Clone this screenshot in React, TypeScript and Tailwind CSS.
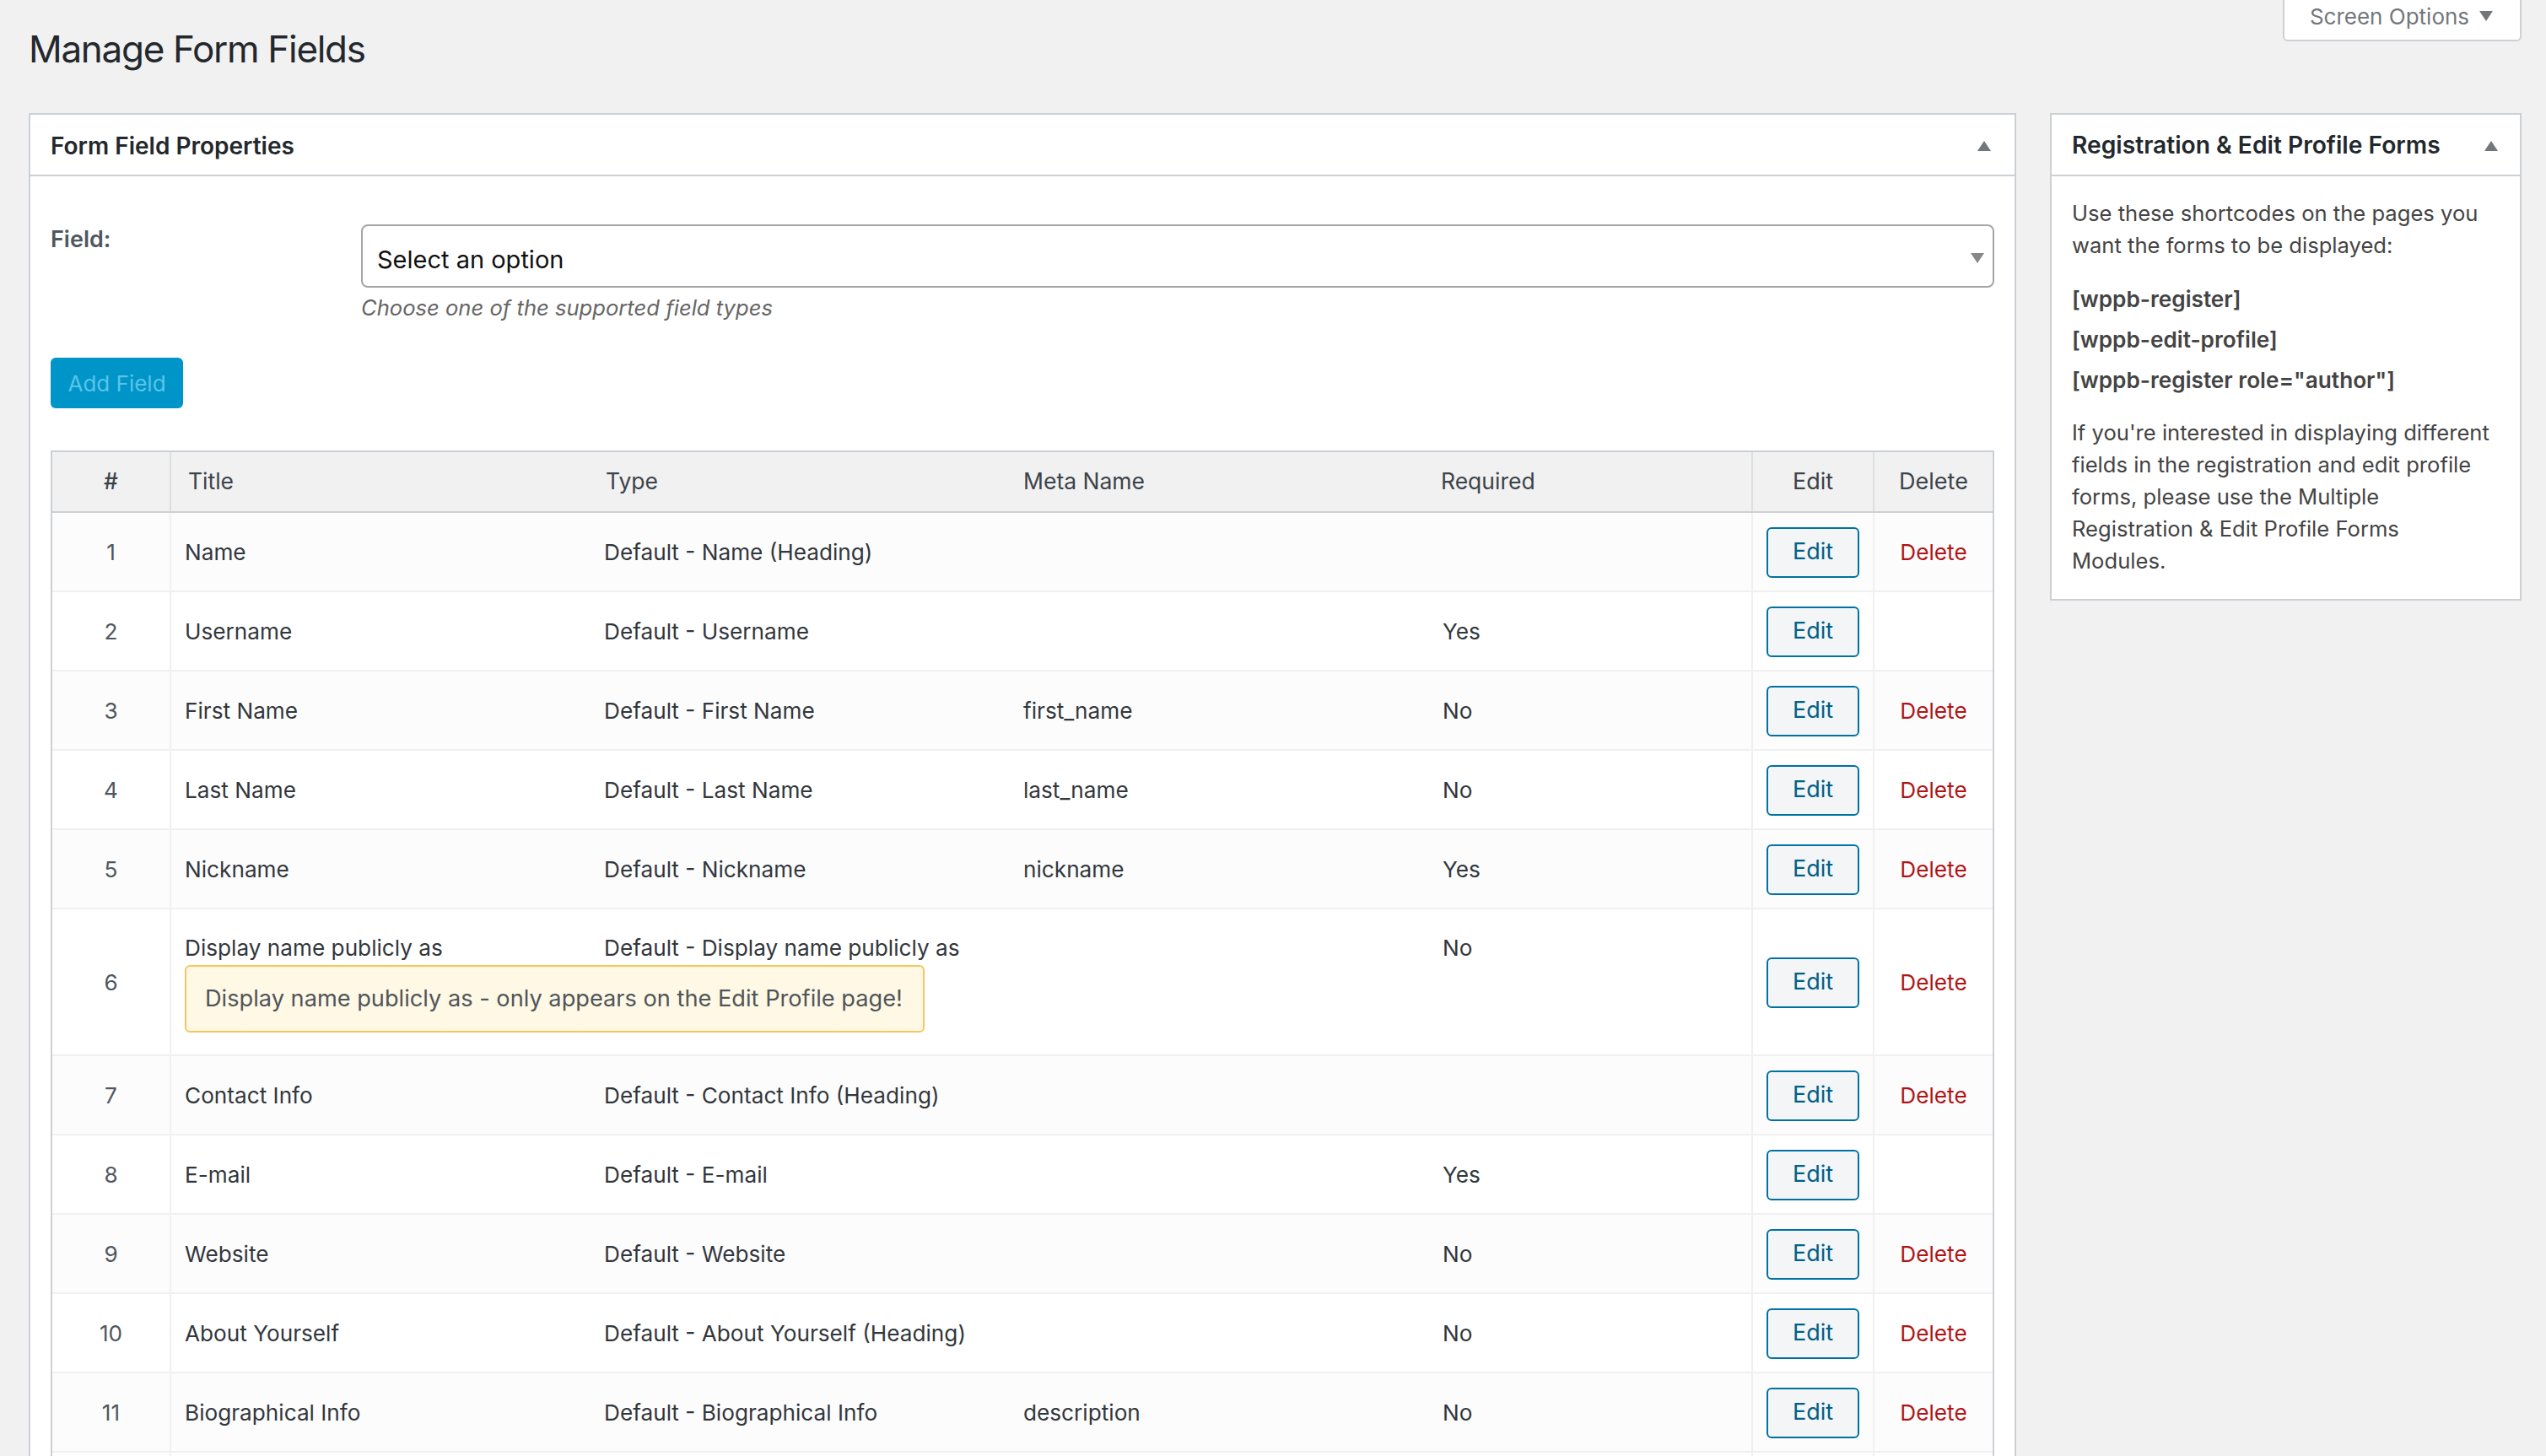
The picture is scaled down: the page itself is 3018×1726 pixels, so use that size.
import React from "react";

const rows: [string, string, string, string, string, boolean][] = [
  ["1", "Name", "Default - Name (Heading)", "", "", true],
  ["2", "Username", "Default - Username", "", "Yes", false],
  ["3", "First Name", "Default - First Name", "first_name", "No", true],
  ["4", "Last Name", "Default - Last Name", "last_name", "No", true],
  ["5", "Nickname", "Default - Nickname", "nickname", "Yes", true],
  ["6", "Display name publicly as", "Default - Display name publicly as", "", "No", true],
  ["7", "Contact Info", "Default - Contact Info (Heading)", "", "", true],
  ["8", "E-mail", "Default - E-mail", "", "Yes", false],
  ["9", "Website", "Default - Website", "", "No", true],
  ["10", "About Yourself", "Default - About Yourself (Heading)", "", "No", true],
  ["11", "Biographical Info", "Default - Biographical Info", "description", "No", true],
];

const gridCols = "grid grid-cols-[141px_500px_497px_494px_384px_144px_1fr]";

function Triangle({ up = true, className = "" }: { up?: boolean; className?: string }) {
  return (
    <svg width="16" height="12" viewBox="0 0 16 12" className={className}>
      <path d={up ? "M8 0 L16 12 L0 12 Z" : "M0 0 L16 0 L8 12 Z"} fill="currentColor" />
    </svg>
  );
}

function Row({ r, i }: { r: (typeof rows)[number]; i: number }) {
  const [n, title, type, meta, req, del] = r;
  const tall = n === "6";
  return (
    <div
      className={`${gridCols} border-b-2 border-[#f0f0f1] ${i % 2 === 0 ? "bg-[#fcfcfd]" : "bg-white"} ${tall ? "h-[174px]" : "h-[94px]"}`}
    >
      <div className="flex items-center justify-center pt-[2px] border-r-2 border-[#f0f0f1] text-[#50575e]">{n}</div>
      {tall ? (
        <div className="pl-[16px] pt-[30px] whitespace-nowrap text-[#32373c]">
          <div className="leading-[32px]">{title}</div>
          <div className="mt-[4px] w-[877px] h-[80px] flex items-center pl-[22px] rounded-[6px] border-2 border-[#f6c560] bg-[#fff8e5] text-[#50555a] text-[27.2px] relative z-10">
            Display name publicly as - only appears on the Edit Profile page!
          </div>
        </div>
      ) : (
        <div className="flex items-center pt-[2px] pl-[16px] text-[#32373c]">{title}</div>
      )}
      <div className={`flex pl-[13px] whitespace-nowrap text-[#32373c] ${tall ? "pt-[30px] leading-[32px]" : "items-center pt-[2px]"}`}>{type}</div>
      <div className="flex items-center pt-[2px] pl-[13px] text-[#32373c]">{meta}</div>
      <div className={`flex pl-[16px] border-r-2 border-[#f0f0f1] text-[#32373c] ${tall ? "pt-[30px] leading-[32px]" : "items-center pt-[2px]"}`}>{req}</div>
      <div className="flex items-center justify-center pt-[1px] border-r-2 border-[#f0f0f1]">
        <div className="w-[110px] h-[60px] flex items-center justify-center rounded-[6px] border-2 border-[#0071a1] bg-[#f3f5f6] text-[#016087] text-[27px]">
          Edit
        </div>
      </div>
      <div className="flex items-center justify-center pt-[2px] text-[#b01515]">{del ? "Delete" : ""}</div>
    </div>
  );
}

export default function App() {
  return (
    <div className="w-[3018px] h-[1726px] overflow-hidden bg-[#f1f1f1] pl-[34px] pr-[29px] [font-family:Inter,sans-serif] text-[26.2px]">
      <div className="flex justify-between items-start h-[134px]">
        <h1 className="mt-[30px] text-[44px] tracking-[-1.3px] leading-[56px] text-[#23282d]">Manage Form Fields</h1>
        <div className="w-[283px] h-[49px] flex items-center justify-center gap-[14px] bg-white border-2 border-t-0 border-[#ccd0d4] rounded-b-[6px] text-[#72777c] text-[26px]">
          <span className="relative -top-[4px]">Screen Options</span>
          <Triangle up={false} className="relative -top-[5px] -left-[2px]" />
        </div>
      </div>
      <div className="flex gap-[40px] items-start">
        <div className="w-[2356px] bg-white border-2 border-[#ccd0d4]">
          <div className="h-[73px] flex items-center justify-between pl-[24px] pr-[28px] border-b-2 border-[#ccd0d4]">
            <span className="font-semibold text-[28px] relative top-[1px] text-[#23282d]">Form Field Properties</span>
            <Triangle className="text-[#72777c] mt-[2px]" />
          </div>
          <div className="px-[24px] pt-[57px]">
            <div className="flex items-start">
              <div className="w-[368px] -mt-[2px] font-semibold text-[27px] text-[#50575e]">Field:</div>
              <div className="flex-1">
                <div className="h-[75px] flex items-center justify-between pl-[17px] pr-[10px] bg-white border-2 border-[#a5a5a5] rounded-[8px] text-[29px] text-[#111111]">
                  <span className="relative top-[4px]">Select an option</span>
                  <Triangle up={false} className="text-[#888888] mt-[4px]" />
                </div>
                <div className="mt-[8px] italic text-[#666666] text-[25.6px] leading-[32px]">Choose one of the supported field types</div>
              </div>
            </div>
            <div className="mt-[43px] w-[157px] h-[60px] flex items-center justify-center rounded-[6px] bg-[#0095c8] text-[#5cc3e8] text-[26px]">
              Add Field
            </div>
            <div className="mt-[50px] border-2 border-[#ccd0d4]">
              <div className={`${gridCols} h-[72px] bg-[#f1f1f1] border-b-2 border-[#ccd0d4] text-[#3c434a] text-[26.5px]`}>
                <div className="flex items-center justify-center border-r-2 border-[#dcdee0] font-medium">#</div>
                <div className="flex items-center pl-[20px]">Title</div>
                <div className="flex items-center pl-[15px]">Type</div>
                <div className="flex items-center pl-[13px]">Meta Name</div>
                <div className="flex items-center pl-[14px] border-r-2 border-[#dcdee0]">Required</div>
                <div className="flex items-center justify-center border-r-2 border-[#dcdee0] text-[27px]">Edit</div>
                <div className="flex items-center justify-center text-[27px]">Delete</div>
              </div>
              {rows.map((r, i) => (
                <Row key={r[0]} r={r} i={i} />
              ))}
              <div className={`${gridCols} h-[94px] bg-white`}>
                <div className="border-r-2 border-[#f0f0f1]" />
                <div />
                <div />
                <div />
                <div className="border-r-2 border-[#f0f0f1]" />
                <div className="border-r-2 border-[#f0f0f1]" />
                <div />
              </div>
            </div>
          </div>
        </div>
        <div className="w-[559px] bg-white border-2 border-[#ccd0d4]">
          <div className="h-[73px] flex items-center justify-between pl-[24px] pr-[26px] border-b-2 border-[#ccd0d4]">
            <span className="font-semibold text-[28.2px] relative top-[1px] text-[#23282d]">Registration &amp; Edit Profile Forms</span>
            <Triangle className="text-[#72777c] mt-[2px]" />
          </div>
          <div className="pl-[24px] pr-[30px] pt-[25px] pb-[26px] text-[25.6px] leading-[38px] text-[#444444]">
            <p>Use these shortcodes on the pages you want the forms to be displayed:</p>
            <div className="mt-[26px] font-semibold text-[26.2px]">[wppb-register]</div>
            <div className="mt-[10px] font-semibold text-[26.2px]">[wppb-edit-profile]</div>
            <div className="mt-[10px] font-semibold text-[26.2px]">[wppb-register role="author"]</div>
            <p className="mt-[24px]">
              If you're interested in displaying different fields in the registration and edit profile forms, please use the Multiple Registration &amp; Edit Profile Forms Modules.
            </p>
          </div>
        </div>
      </div>
    </div>
  );
}
